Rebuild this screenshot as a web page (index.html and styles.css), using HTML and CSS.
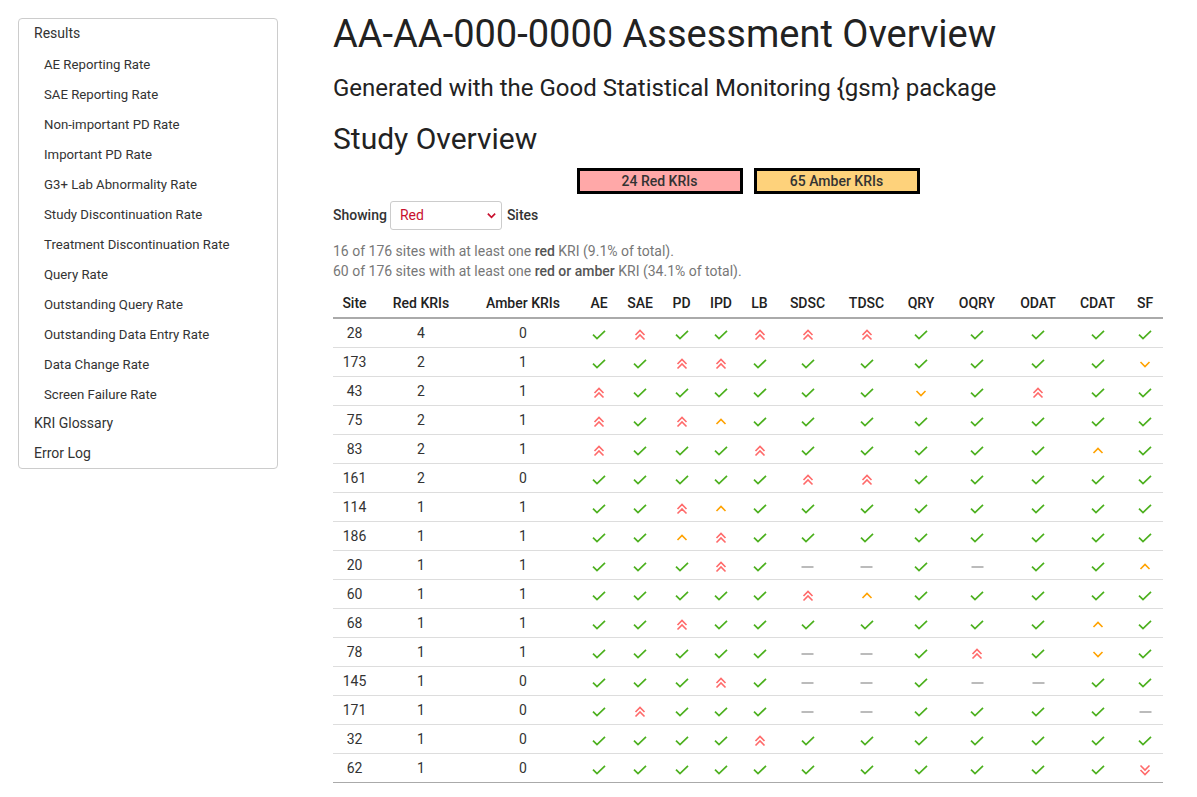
FILE: index.html
```html
<!DOCTYPE html>
<html lang="en">
<head>
<meta charset="utf-8">
<title>AA-AA-000-0000 Assessment Overview</title>
<link rel="stylesheet" href="styles.css">
</head>
<body>
<svg class="defs" width="0" height="0" aria-hidden="true">
  <symbol id="ok" viewBox="0 0 14 10"><path d="M1 4.6 L5 8.6 L13 0.8" fill="none" stroke="currentColor" stroke-width="1.7"/></symbol>
  <symbol id="uu" viewBox="0 0 12 12"><path d="M1.5 6 L6 1.5 L10.5 6 M1.5 10.5 L6 6 L10.5 10.5" fill="none" stroke="currentColor" stroke-width="1.6"/></symbol>
  <symbol id="dd" viewBox="0 0 12 12"><path d="M1.5 1.5 L6 6 L10.5 1.5 M1.5 6 L6 10.5 L10.5 6" fill="none" stroke="currentColor" stroke-width="1.6"/></symbol>
  <symbol id="u" viewBox="0 0 12 12"><path d="M1.5 8 L6 3.5 L10.5 8" fill="none" stroke="currentColor" stroke-width="1.6"/></symbol>
  <symbol id="d" viewBox="0 0 12 12"><path d="M1.5 4 L6 8.5 L10.5 4" fill="none" stroke="currentColor" stroke-width="1.6"/></symbol>
  <symbol id="na" viewBox="0 0 12 12"><path d="M0 6 L12 6" fill="none" stroke="currentColor" stroke-width="1.6"/></symbol>
</svg>
<div class="page">
  <nav class="sidebar">
    <div class="nav-item nav-top">Results</div>
    <div class="nav-item nav-sub">AE Reporting Rate</div>
    <div class="nav-item nav-sub">SAE Reporting Rate</div>
    <div class="nav-item nav-sub">Non-important PD Rate</div>
    <div class="nav-item nav-sub">Important PD Rate</div>
    <div class="nav-item nav-sub">G3+ Lab Abnormality Rate</div>
    <div class="nav-item nav-sub">Study Discontinuation Rate</div>
    <div class="nav-item nav-sub">Treatment Discontinuation Rate</div>
    <div class="nav-item nav-sub">Query Rate</div>
    <div class="nav-item nav-sub">Outstanding Query Rate</div>
    <div class="nav-item nav-sub">Outstanding Data Entry Rate</div>
    <div class="nav-item nav-sub">Data Change Rate</div>
    <div class="nav-item nav-sub">Screen Failure Rate</div>
    <div class="nav-item nav-after">KRI Glossary</div>
    <div class="nav-item">Error Log</div>
  </nav>
  <main class="main">
    <h1 class="title">AA-AA-000-0000 Assessment Overview</h1>
    <h3 class="subtitle">Generated with the Good Statistical Monitoring {gsm} package</h3>
    <h2 class="section">Study Overview</h2>
    <div class="badges">
      <div class="badge badge-red">24 Red KRIs</div>
      <div class="badge badge-amber">65 Amber KRIs</div>
    </div>
    <div class="showing">
      <span>Showing</span>
      <div class="select"><span>Red</span><svg class="sel-chev" viewBox="0 0 12 12"><path d="M2 4 L6 8 L10 4" fill="none" stroke="currentColor" stroke-width="1.8"/></svg></div>
      <span>Sites</span>
    </div>
    <p class="summary">16 of 176 sites with at least one <b>red</b> KRI (9.1% of total).<br>60 of 176 sites with at least one <b>red or amber</b> KRI (34.1% of total).</p>
    <table class="kri">
      <thead>
        <tr>
          <th class="c-site">Site</th><th class="c-red">Red KRIs</th><th class="c-amb">Amber KRIs</th>
          <th class="c-ae">AE</th><th class="c-sae">SAE</th><th class="c-pd">PD</th><th class="c-ipd">IPD</th><th class="c-lb">LB</th>
          <th class="c-sdsc">SDSC</th><th class="c-tdsc">TDSC</th><th class="c-qry">QRY</th><th class="c-oqry">OQRY</th>
          <th class="c-odat">ODAT</th><th class="c-cdat">CDAT</th><th class="c-sf">SF</th>
        </tr>
      </thead>
      <tbody id="rows"></tbody>
    </table>
  </main>
</div>
<script src="app.js"></script>
</body>
</html>
```
FILE: app.js
```js
const data = [
  ["28",4,0,"ok uu ok ok uu uu uu ok ok ok ok ok"],
  ["173",2,1,"ok ok uu uu ok ok ok ok ok ok ok d"],
  ["43",2,1,"uu ok ok ok ok ok ok d ok uu ok ok"],
  ["75",2,1,"uu ok uu u ok ok ok ok ok ok ok ok"],
  ["83",2,1,"uu ok ok ok uu ok ok ok ok ok u ok"],
  ["161",2,0,"ok ok ok ok ok uu uu ok ok ok ok ok"],
  ["114",1,1,"ok ok uu u ok ok ok ok ok ok ok ok"],
  ["186",1,1,"ok ok u uu ok ok ok ok ok ok ok ok"],
  ["20",1,1,"ok ok ok uu ok na na ok na ok ok u"],
  ["60",1,1,"ok ok ok ok ok uu u ok ok ok ok ok"],
  ["68",1,1,"ok ok uu ok ok ok ok ok ok ok u ok"],
  ["78",1,1,"ok ok ok ok ok na na ok uu ok d ok"],
  ["145",1,0,"ok ok ok uu ok na na ok na na ok ok"],
  ["171",1,0,"ok uu ok ok ok na na ok ok ok ok na"],
  ["32",1,0,"ok ok ok ok uu ok ok ok ok ok ok ok"],
  ["62",1,0,"ok ok ok ok ok ok ok ok ok ok ok dd"]
];
const cls = {ok:"i-ok", uu:"i-red", dd:"i-red", u:"i-amb", d:"i-amb", na:"i-na"};
const tb = document.getElementById("rows");
tb.innerHTML = data.map(([s,r,a,icons]) =>
  "<tr><td>"+s+"</td><td>"+r+"</td><td>"+a+"</td>" +
  icons.split(" ").map(k => '<td><svg class="ic ic-'+k+' '+cls[k]+'"><use href="#'+k+'"/></svg></td>').join("") +
  "</tr>").join("");
```
FILE: styles.css
```css
* { box-sizing: border-box; }
body {
  margin: 0;
  font-family: Roboto, "Liberation Sans", sans-serif;
  color: #333;
  background: #fff;
}
.defs { position: absolute; }
.page {
  display: flex;
  align-items: flex-start;
  gap: 55px;
  padding: 0 34px 0 18px;
}
.sidebar {
  flex: 0 0 260px;
  margin-top: 18px;
  border: 1px solid #ccc;
  border-radius: 4px;
  padding: 0;
}
.nav-item {
  height: 30px;
  line-height: 30px;
  padding-left: 15px;
  font-size: 14px;
  color: #333;
}
.nav-top { line-height: 28px; height: 31px; }
.nav-after { line-height: 26px; height: 28px; }
.nav-sub {
  padding-left: 25px;
  font-size: 13.2px;
}
.main {
  width: 830px;
  padding-top: 12px;
}
.title {
  margin: 0;
  font-size: 38px;
  font-weight: 400;
  line-height: 1.2;
  color: #222;
}
.subtitle {
  margin: 16.6px 0 0;
  font-size: 24px;
  font-weight: 400;
  line-height: 1.2;
  color: #222;
}
.section {
  margin: 18px 0 0;
  font-size: 30px;
  font-weight: 400;
  line-height: 1.2;
  color: #222;
}
.badges {
  display: flex;
  justify-content: center;
  gap: 11px;
  margin-top: 11px;
}
.badge {
  width: 166px;
  height: 26px;
  border: 3px solid #000;
  text-align: center;
  font-size: 14px;
  font-weight: 500;
  line-height: 20px;
  color: #333;
}
.badge-red { background: #ffa8a8; }
.badge-amber { background: #fed27b; }
.showing {
  display: flex;
  align-items: center;
  gap: 3px;
  margin-top: 7px;
  font-size: 14px;
  font-weight: 500;
}
.select {
  width: 112px;
  height: 29px;
  border: 1px solid #ccc;
  border-radius: 3px;
  display: flex;
  align-items: center;
  justify-content: space-between;
  padding: 0 4px 0 9px;
  margin-right: 2px;
  color: #c8102e;
  font-weight: 400;
}
.sel-chev { width: 11px; height: 11px; color: #c8102e; }
.summary {
  margin: 11px 0 0;
  font-size: 14px;
  line-height: 20px;
  color: #777;
}
.summary b { font-weight: 500; color: #555; }
.kri {
  margin-top: 9px;
  width: 830px;
  border-collapse: collapse;
  table-layout: fixed;
  font-size: 14px;
}
.kri th {
  font-weight: 500;
  height: 28px;
  padding: 0;
  text-align: center;
  border-bottom: 2px solid #aaa;
  color: #222;
}
.kri td {
  height: 29px;
  padding: 0;
  text-align: center;
  border-bottom: 1px solid #ddd;
}
.kri tbody tr:first-child td { height: 30px; }
.kri tr:last-child td { border-bottom: 1px solid #aaa; }
.c-site { width: 43px; }
.c-red { width: 90px; }
.c-amb { width: 114px; }
.c-ae { width: 38px; }
.c-sae { width: 44px; }
.c-pd { width: 39px; }
.c-ipd { width: 40px; }
.c-lb { width: 37px; }
.c-sdsc { width: 59px; }
.c-tdsc { width: 59px; }
.c-qry { width: 50px; }
.c-oqry { width: 62px; }
.c-odat { width: 60px; }
.c-cdat { width: 59px; }
.c-sf { width: 36px; }
.ic { display: inline-block; vertical-align: middle; }
.ic-ok { width: 14px; height: 10px; }
.ic-uu, .ic-dd, .ic-u, .ic-d, .ic-na { width: 12px; height: 12px; }
.ic-na { width: 13px; }
.i-ok { color: #4cb01e; }
.i-red { color: #ff6a6a; }
.i-amb { color: #ffa200; }
.i-na { color: #aaa; }
```
